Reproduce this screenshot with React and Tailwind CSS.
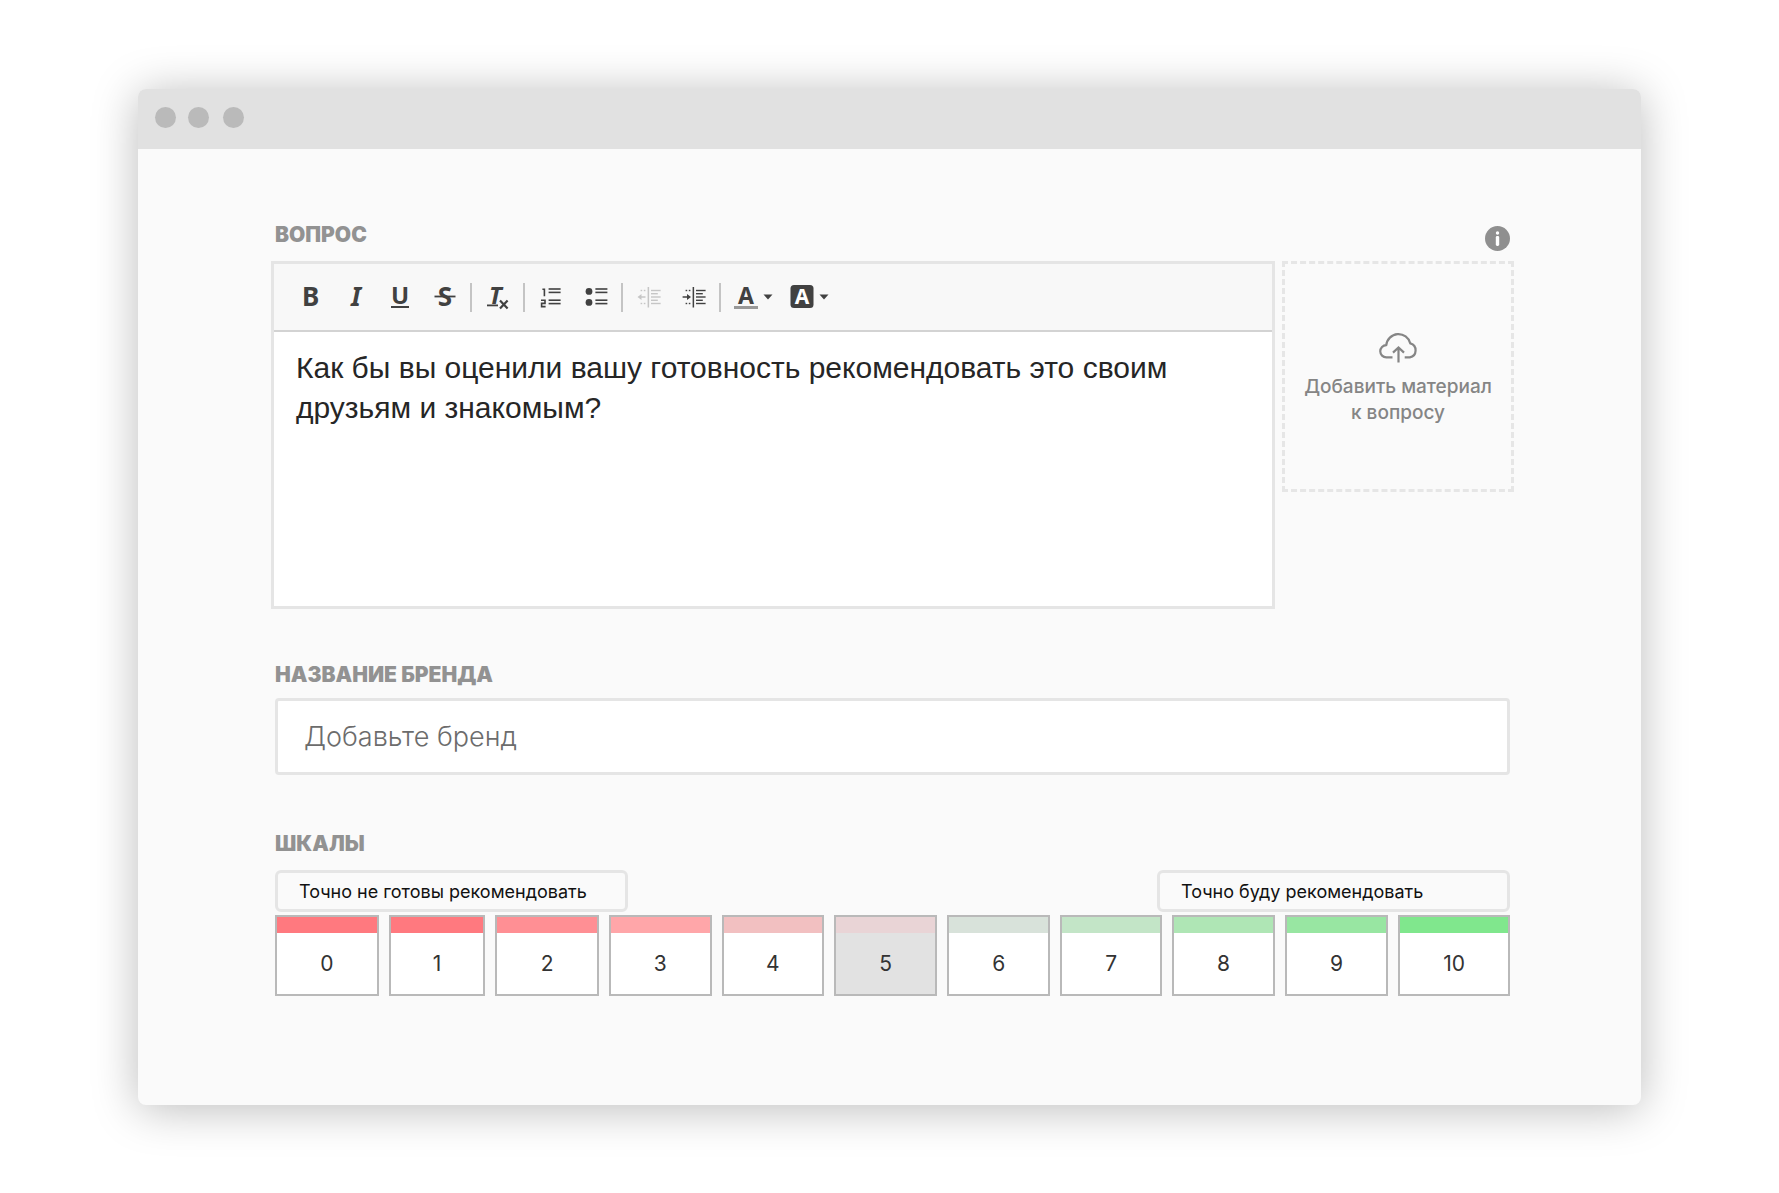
import React from "react";

const scale = [
  { value: 0, bar: "bg-[#ff797f]" },
  { value: 1, bar: "bg-[#ff797f]" },
  { value: 2, bar: "bg-[#ff8f94]" },
  { value: 3, bar: "bg-[#ffa6a9]" },
  { value: 4, bar: "bg-[#f2c0c1]" },
  { value: 5, bar: "bg-[#e9d4d6]" },
  { value: 6, bar: "bg-[#d8e2da]" },
  { value: 7, bar: "bg-[#c3e5c7]" },
  { value: 8, bar: "bg-[#afe6b5]" },
  { value: 9, bar: "bg-[#98e6a2]" },
  { value: 10, bar: "bg-[#80e78d]" },
];

const labelClass = "text-[21px] leading-5 font-black text-[#929292]";

function Separator() {
  return <span className="mx-[3px] h-[29px] w-[2px] shrink-0 bg-[#c4c4c4]" />;
}

function Tool({ label, disabled, children }) {
  return (
    <button
      type="button"
      aria-label={label}
      disabled={disabled}
      className="flex h-11 w-[45px] shrink-0 items-center justify-center"
    >
      <svg
        width="24"
        height="24"
        viewBox="0 0 24 24"
        fill="#414141"
        className="overflow-visible font-['Noto_Sans'] font-bold"
        aria-hidden="true"
      >
        {children}
      </svg>
    </button>
  );
}

function Lines({ x }) {
  return (
    <g>
      <rect x={x} y="3.2" width="12" height="1.6" />
      <rect x={x} y="6.6" width="12" height="1.6" />
      <rect x={x} y="14.4" width="12" height="1.6" />
      <rect x={x} y="17.8" width="12" height="1.6" />
    </g>
  );
}

function IndentBody({ color, children }) {
  return (
    <g fill={color}>
      <rect x="10.6" y="2" width="1.5" height="20.5" />
      <rect x="14" y="4.8" width="9.6" height="1.4" />
      <rect x="14" y="8" width="6.8" height="1.4" />
      <rect x="14" y="11.3" width="9.6" height="1.4" />
      <rect x="14" y="14.6" width="6.8" height="1.4" />
      <rect x="14" y="17.8" width="9.6" height="1.4" />
      <rect x="3.6" y="4.8" width="1.6" height="1.4" />
      <rect x="6.8" y="4.8" width="1.6" height="1.4" />
      <rect x="3.6" y="17.8" width="1.6" height="1.4" />
      <rect x="6.8" y="17.8" width="1.6" height="1.4" />
      {children}
    </g>
  );
}

function Caret() {
  return (
    <svg width="10" height="6" viewBox="0 0 10 6" fill="#414141" aria-hidden="true">
      <path d="M.5.5h9L5 5.5z" />
    </svg>
  );
}

function Toolbar() {
  return (
    <div
      role="toolbar"
      aria-label="Форматирование"
      className="flex h-[68px] items-center border-b-2 border-[#d3d3d3] bg-[#f8f8f8] pl-[13px]"
    >
      <Tool label="Полужирный">
        <text x="12.7" y="20.5" fontSize="26" textAnchor="middle">B</text>
      </Tool>
      <Tool label="Курсив">
        <text x="13" y="20.5" fontSize="26" textAnchor="middle" className="italic">I</text>
      </Tool>
      <Tool label="Подчёркнутый">
        <text x="12" y="19" fontSize="24" textAnchor="middle">U</text>
        <rect x="3" y="21" width="18" height="2" />
      </Tool>
      <Tool label="Зачёркнутый">
        <text x="12" y="20.5" fontSize="26" textAnchor="middle">S</text>
        <rect x="1.5" y="10.6" width="21" height="1.8" />
      </Tool>
      <Separator />
      <Tool label="Очистить форматирование">
        <text x="9.5" y="18.5" fontSize="24" textAnchor="middle" className="italic">T</text>
        <rect x="1" y="19.5" width="11" height="1.8" />
        <path d="M14 15.5l7.6 8M21.6 15.5l-7.6 8" stroke="#414141" strokeWidth="2.2" />
      </Tool>
      <Separator />
      <Tool label="Нумерованный список">
        <path d="M3.4 4.2H5.4V11.2M2 15.2H6V18.4H2.6V21.6H6.6" fill="none" stroke="#414141" strokeWidth="1.6" />
        <Lines x="9.6" />
      </Tool>
      <Tool label="Маркированный список">
        <circle cx="5" cy="6.4" r="3.4" />
        <circle cx="5" cy="17.4" r="3.4" />
        <Lines x="11.4" />
      </Tool>
      <Separator />
      <Tool label="Уменьшить отступ" disabled>
        <IndentBody color="#c6c6c6">
          <path d="M.5 12l4-3v2.2h4v1.6h-4V15z" />
        </IndentBody>
      </Tool>
      <Tool label="Увеличить отступ">
        <IndentBody color="#414141">
          <path d="M9 12l-4-3v2.2H.6v1.6H5V15z" />
        </IndentBody>
      </Tool>
      <Separator />
      <button type="button" aria-label="Цвет текста" className="flex h-11 w-[57px] shrink-0 items-center gap-[5px] pl-[10px]">
        <svg width="24" height="24" viewBox="0 0 24 24" fill="#414141" className="overflow-visible font-['Noto_Sans'] font-bold" aria-hidden="true">
          <text x="12" y="18.5" fontSize="23" textAnchor="middle">A</text>
          <rect x="0" y="21" width="24" height="3" fill="#999999" />
        </svg>
        <Caret />
      </button>
      <button type="button" aria-label="Цвет фона" className="flex h-11 shrink-0 items-center gap-[5px] pl-[9px]">
        <svg width="24" height="24" viewBox="0 0 24 24" className="overflow-visible font-['Noto_Sans'] font-bold" aria-hidden="true">
          <rect x=".5" y="0" width="23" height="23" rx="3.5" fill="#414141" />
          <text x="12" y="19" fontSize="21" textAnchor="middle" fill="#ffffff">A</text>
        </svg>
        <Caret />
      </button>
    </div>
  );
}

export default function App() {
  return (
    <div className="min-h-screen bg-white px-[138px] pt-[89px] pb-[88px] font-[Inter,'Noto_Sans',sans-serif]">
      <main className="overflow-hidden rounded-lg bg-[#fafafa] shadow-[0_4px_46px_rgba(0,0,0,0.27)]">
        <div className="flex h-[60px] items-center bg-[#e1e1e1] pb-[3px] pl-[17px]">
          <span className="size-[21px] rounded-full bg-[#bababa]" />
          <span className="ml-3 size-[21px] rounded-full bg-[#bababa]" />
          <span className="ml-[14px] size-[21px] rounded-full bg-[#bababa]" />
        </div>

        <form className="pt-[76px] pr-[127px] pb-[109px] pl-[133px]">
          <div className="flex h-[26px] items-start justify-between px-1">
            <label htmlFor="question" className={labelClass}>ВОПРОС</label>
            <button type="button" aria-label="Справка" className="self-end">
              <svg width="25" height="25" viewBox="0 0 25 25" aria-hidden="true">
                <circle cx="12.5" cy="12.5" r="12.5" fill="#8f8f8f" />
                <circle cx="12.5" cy="7" r="1.7" fill="#fff" />
                <rect x="10.8" y="10" width="3.4" height="10" rx="1.4" fill="#fff" />
              </svg>
            </button>
          </div>

          <div className="mt-[10px] flex items-start gap-[7px]">
            <div className="min-w-0 flex-1 border-[3px] border-[#e5e5e5] bg-white">
              <Toolbar />
              <textarea
                id="question"
                defaultValue="Как бы вы оценили вашу готовность рекомендовать это своим друзьям и знакомым?"
                className="block h-[274px] w-full resize-none px-[22px] py-4 font-['Liberation_Sans',sans-serif] text-[30px] leading-10 text-[#262626] outline-none"
              />
            </div>
            <button
              type="button"
              className="flex h-[231px] w-[232px] shrink-0 flex-col items-center border-[3px] border-dashed border-[#e6e6e6] pt-[68px] text-[19px] leading-[26px] font-medium text-[#858585]"
            >
              <svg width="39" height="31" viewBox="0 0 39 31" fill="none" stroke="#858585" strokeWidth="2.2" aria-hidden="true">
                <path d="M13.5 25.4H7.4A6 6 0 0 1 7.3 13.2A12.2 12.2 0 0 1 31.3 11.4A7.2 7.2 0 0 1 30.8 25.4H25.7" strokeLinejoin="round" />
                <path d="M19.5 30.5V15.5M14 20.6L19.5 15.4L25 20.6" />
              </svg>
              <span className="mt-[11px] whitespace-nowrap">
                Добавить материал
                <br />к вопросу
              </span>
            </button>
          </div>

          <div className="mt-14 flex flex-col px-1">
            <label htmlFor="brand" className={labelClass}>НАЗВАНИЕ БРЕНДА</label>
            <input
              id="brand"
              type="text"
              placeholder="Добавьте бренд"
              className="mt-[13px] h-[77px] w-full rounded border-[3px] border-[#e5e5e5] bg-white px-[26px] text-[27px] font-light outline-none placeholder:text-[#6c6c6c]"
            />
          </div>

          <fieldset className="mt-[59px] px-1">
            <legend className={labelClass}>ШКАЛЫ</legend>
            <div className="mt-4 flex justify-between">
              <input
                type="text"
                aria-label="Подпись минимума"
                defaultValue="Точно не готовы рекомендовать"
                className="h-[42px] w-[353px] rounded-md border-[3px] border-[#e5e5e5] px-[21px] text-[18px] text-[#111111] outline-none"
              />
              <input
                type="text"
                aria-label="Подпись максимума"
                defaultValue="Точно буду рекомендовать"
                className="h-[42px] w-[353px] rounded-md border-[3px] border-[#e5e5e5] px-[21px] text-[18px] text-[#111111] outline-none"
              />
            </div>
            <div className="mt-[3px] grid grid-cols-[104fr_97fr_104fr_103fr_103fr_103fr_104fr_102fr_103fr_104fr_112fr] gap-[10px]">
              {scale.map(({ value, bar }) => (
                <label
                  key={value}
                  className="relative flex h-[81px] flex-col border-2 border-[#b9b9b9] bg-white text-[21px] text-[#333333] has-checked:bg-[#e2e2e2]"
                >
                  <input type="radio" name="score" value={value} defaultChecked={value === 5} className="sr-only" />
                  <span className={"h-[16px] " + bar} />
                  <span className="flex flex-1 items-center justify-center">{value}</span>
                </label>
              ))}
            </div>
          </fieldset>
        </form>
      </main>
    </div>
  );
}
